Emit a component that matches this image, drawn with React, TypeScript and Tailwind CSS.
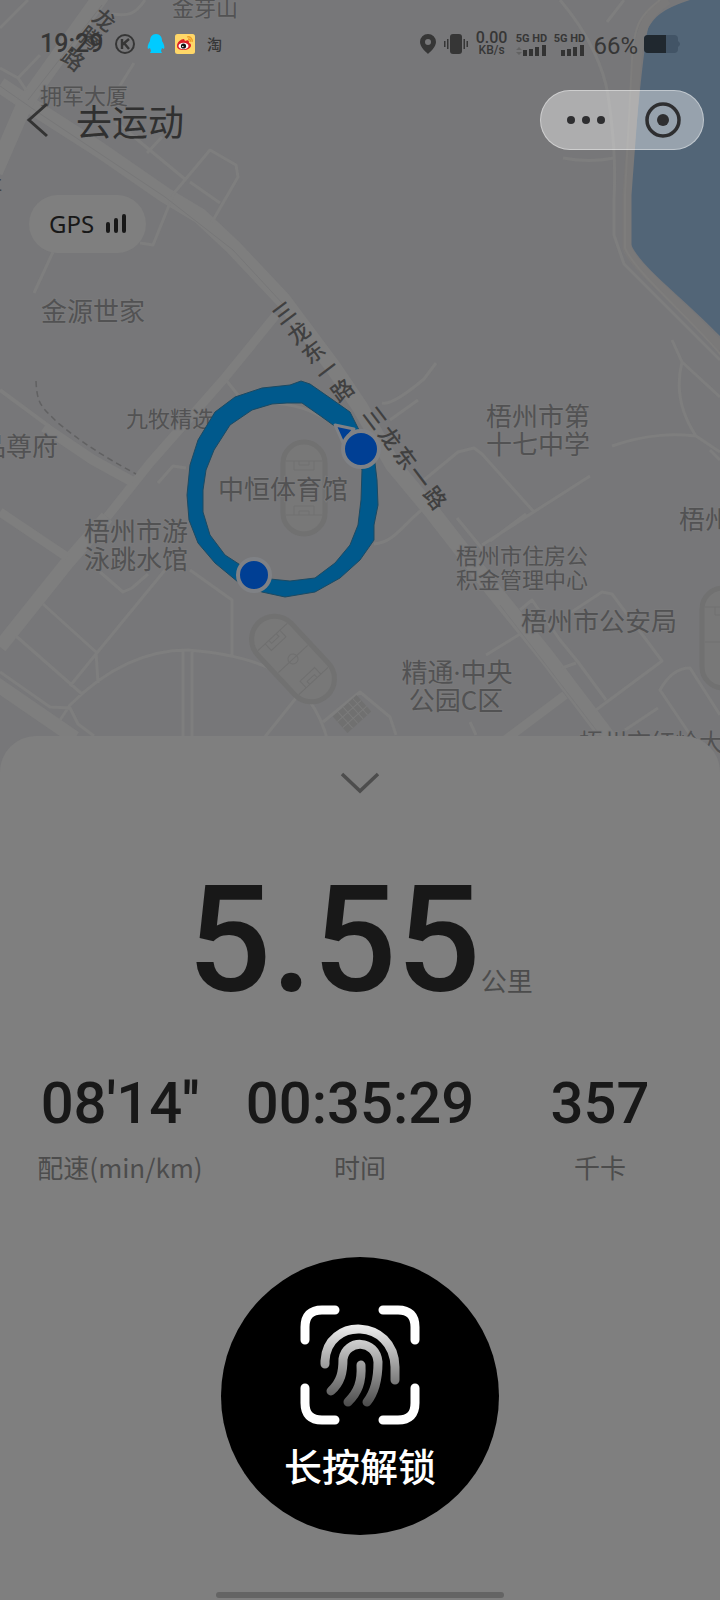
import React from "react";

const CJK = "font-['Noto_Sans_CJK_SC',sans-serif]";

type Label = { x: number; y: number; size: number; text: string; anchor?: "start" | "middle" };

const labels: Label[] = [
  { x: 172, y: 16, size: 22, text: "金芽山" },
  { x: 40, y: 104, size: 22, text: "拥军大厦" },
  { x: 41, y: 321, size: 26, text: "金源世家" },
  { x: 126, y: 427, size: 22, text: "九牧精选" },
  { x: -20, y: 456, size: 26, text: "品尊府" },
  { x: 218, y: 499, size: 26, text: "中恒体育馆" },
  { x: 84, y: 541, size: 26, text: "梧州市游" },
  { x: 84, y: 569, size: 26, text: "泳跳水馆" },
  { x: 486, y: 426, size: 26, text: "梧州市第" },
  { x: 486, y: 454, size: 26, text: "十七中学" },
  { x: 456, y: 564, size: 22, text: "梧州市住房公" },
  { x: 456, y: 588, size: 22, text: "积金管理中心" },
  { x: 521, y: 631, size: 26, text: "梧州市公安局" },
  { x: 679, y: 529, size: 26, text: "梧州市" },
  { x: 456, y: 710, size: 26, text: "公园C区", anchor: "middle" },
  { x: 579, y: 751, size: 24, text: "梧州市红岭大厦" },
];

const thinRoads = [
  "M0 68 18 78 26 90M18 78 40 55M145 0C135 15 128 16 112 14M28 0 0 28M134 63 116 92M116 122 186 180",
  "M162 137 147 153M174 193 210 150 236 165 238 177 212 222M174 193 153 245 140 243M53 252 34 293",
  "M190 182 220 203M226 380 238 395M236 404Q290 398 322 417",
  "M560 0C590 35 604 70 608 95 613 130 616 160 614 200L614 235 624 264 720 360",
  "M607 22 624 0M563 158Q590 163 614 158",
  "M436 363 424 379C405 395 390 405 382 403M418 400 390 420M374 544C395 542 402 525 424 508",
  "M424 480 458 452 474 448 482 454 534 512M482 545 590 476M490 541 526 514M457 518 484 551",
  "M612 446C650 433 675 434 696 436L720 452M672 340 682 362C675 390 682 415 696 436M682 362 720 397M710 450 720 460",
  "M570 613 602 592 612 594 662 661 596 710M520 610 532 600 560 640 578 662 606 700M486 655 520 634M562 668 576 663",
  "M695 742 660 690Q672 668 690 668L720 715M625 730 658 708M470 722 476 735",
  "M158 483 173 466 186 468M100 572 123 592 132 588 148 574M165 570 96 654 70 686M43 604 96 652 98 683M16 636 82 694",
  "M190 570 232 600 232 655M60 720 70 705C110 665 150 650 188 650 250 655 310 670 328 742M183 651V745M192 651V745M296 698 264 738M323 722 345 704 360 692 390 717 396 735M0 672 50 707 70 708 78 724 94 736",
];

function Pitch() {
  return (
    <g fill="none" stroke="#717171" strokeWidth="1">
      <rect x="-21" y="-46" width="42" height="92" rx="21" fill="#787878" strokeWidth="5" />
      <path d="M-18-27H18M-18 27H18M-10-27v9H10v-9M-5-27v4H5v-4M-10 27v-9H10v9M-5 27v-4H5v4" />
    </g>
  );
}

function MapCanvas() {
  return (
    <svg
      className={`absolute inset-0 h-full w-full ${CJK}`}
      viewBox="0 0 720 776"
      preserveAspectRatio="xMidYMin slice"
      role="img"
      aria-label="运动轨迹地图"
    >
      <rect width="720" height="776" fill="#777779" />
      <path d="M690 0C665 8 656 15 648 28 642 60 635 140 630 200V242C638 265 680 295 720 336V0Z" fill="#526577" />
      <path d="M668 0C645 15 640 30 637 60L627 195V248C635 270 690 310 722 348" fill="none" stroke="#7a7979" strokeWidth="9" />
      <path d="M660 0C640 15 634 25 632 60L625 195V248C635 272 690 318 722 356" fill="none" stroke="#7e7d7c" strokeWidth="2" />
      <g fill="none" stroke="#7e7e7e" strokeLinejoin="round">
        <path d="M0 85 33 107 100 150 165 195 200 216 233 247 283 300 333 367 360 407 393 465 433 513 493 590 547 657 600 727 620 755" strokeWidth="16" />
        <path d="M102-5 25 103-5 172" strokeWidth="16" />
        <path d="M276 315 223 380 150 463 107 517" strokeWidth="9" />
        <path d="M107 517 67 563 0 647" strokeWidth="14" />
        <path d="M0 390 50 427" strokeWidth="4" />
        <path d="M44 427 93 460 133 482" strokeWidth="10" />
        <path d="M0 512 67 557" strokeWidth="9" />
        <path d="M-5 683 75 738" strokeWidth="14" />
        <path d="M565 695 505 740" strokeWidth="9" />
        <path d={thinRoads.join("")} strokeWidth="3" />
      </g>
      <path d="M0 86 33 109 165 197 233 250 283 304M102 5 28 100" fill="none" stroke="#777778" />
      <path d="M500 605 600 735" fill="none" stroke="#79797a" />
      <path d="M36 381C37 405 42 407 58 423 85 445 105 457 136 474" fill="none" stroke="#616162" strokeWidth="1.5" strokeDasharray="6 4" />

      <g transform="translate(304 488)"><Pitch /></g>
      <g transform="translate(293 659) rotate(-43)">
        <rect x="-23" y="-50" width="46" height="100" rx="23" fill="#787878" stroke="#717171" strokeWidth="5" />
        <path d="M-20-30H20M-20 30H20M-10-30v9H10v-9M-5-30v4H5v-4M-10 30v-9H10v9M-5 30v-4H5v4M-20 0H20" fill="none" stroke="#6f6f6f" />
        <circle r="5" fill="none" stroke="#6f6f6f" />
      </g>
      <g transform="translate(723 638)">
        <rect x="-21" y="-50" width="60" height="100" rx="21" fill="#787878" stroke="#717171" strokeWidth="5" />
        <path d="M-18-31H20M-18 4H20M-8-31v8h20" fill="none" stroke="#717171" />
      </g>
      <g transform="translate(352 714) rotate(-42)" stroke="#7b7b7b">
        <rect x="-16" y="-11" width="32" height="22" fill="#707070" stroke="none" />
        <path d="M-16-4H16M-16 4H16M-9-11V11M-2-11V11M5-11V11M11-11V11" />
      </g>

      <g fill="#525253" stroke="#7a7a7b" strokeWidth="2" paintOrder="stroke">
        {labels.map((l) => (
          <text key={l.text} x={l.x} y={l.y} fontSize={l.size} textAnchor={l.anchor ?? "start"}>
            {l.text}
          </text>
        ))}
        <text x="457" y="682" fontSize="26" textAnchor="middle">
          精通<tspan fontFamily="Noto Sans, sans-serif">·</tspan>中央
        </text>
      </g>
      <text x="-18" y="190" fontSize="20" fill="#444">社</text>

      <g fontSize="22" fontWeight="500" fill="#404040" textAnchor="middle">
        <g transform="translate(104 20) rotate(38)">
          <text x="0 0 0" y="8 31 58">龙腾路</text>
        </g>
        <g transform="translate(284 313) rotate(-37)">
          <text x="0 0 0 0 0" y="8 33 57 80 105">三龙东一路</text>
        </g>
        <g transform="translate(405 458) rotate(53)">
          <text x="-50 -25 0 24 50" y="8 8 8 8 8">三龙东一路</text>
        </g>
      </g>

      <path
        fillRule="evenodd"
        fill="#00598c"
        stroke="#1c4a63"
        strokeWidth="1"
        strokeLinejoin="round"
        d="M301 381 310 384 333 400 350 412 358 428 374 455 377 480 378 505 374 525 374 540 360 560 340 578 315 592 285 597 262 592 238 582 215 563 198 543 189 520 187 495 190 465 198 440 215 412 235 397 262 388 290 385ZM287 403 302 403 322 417 340 430 358 455 362 470 361 500 358 525 350 545 335 563 315 578 290 581 270 579 245 568 225 555 210 535 203 512 203 490 206 470 214 450 230 425 252 410 272 404Z"
      />
      <g fill="#003f94" stroke="#7f8185" strokeWidth="4">
        <path d="M335 425 354 429 343 443Z" strokeWidth="3" strokeLinejoin="round" />
        <circle cx="361" cy="449" r="18" />
        <circle cx="254" cy="575" r="16" />
      </g>
    </svg>
  );
}

function Bars({ arrows = false }: { arrows?: boolean }) {
  return (
    <svg className="h-[11px] w-8" viewBox="0 0 32 11" aria-hidden="true">
      {arrows && <path d="M1 5 4 2 7 5ZM1 7 4 10 7 7Z" fill="#636363" />}
      <path d="M8 5h4v6H8ZM14 4h4v7h-4ZM20 2h4v9h-4ZM27 0h4v11h-4Z" fill="#333" />
    </svg>
  );
}

function StatusBar() {
  return (
    <div className="flex h-7 items-center justify-between pr-10 pl-10 font-[Roboto,sans-serif] text-[#363636]">
      <div className="flex items-center">
        <span className="w-[75px] text-[25px] leading-7 font-medium">19:29</span>
        <svg className="mr-3 h-5 w-5" viewBox="0 0 20 20" fill="none" stroke="currentColor" strokeWidth="2" aria-hidden="true">
          <circle cx="10" cy="10" r="9" />
          <path d="M7 5v10M14 5 7 11M9 9l5 6" strokeWidth="2.4" />
        </svg>
        <svg className="mr-2 h-5 w-5" viewBox="0 0 20 20" aria-hidden="true">
          <path d="M9 0C13 0 15 3 15 7 17 10 18 13 17 15L15 14 14 17 15 19H3L4 17 3 14 1 15C0 13 1 10 3 7 3 3 5 0 9 0Z" fill="#00cbff" />
        </svg>
        <svg className="mr-3 h-5 w-5" viewBox="0 0 20 20" aria-hidden="true">
          <rect width="20" height="20" rx="2.5" fill="#ffd768" />
          <path d="M2 12C2 8 6 5 9 5L10 7C14 5 14 7 14 9 18 10 16 16 9 16 5 16 2 15 2 12Z" fill="#dc1f28" />
          <ellipse cx="8.500" cy="12" rx="5" ry="3.200" fill="#fff" />
          <circle cx="8.500" cy="12" r="2.600" fill="#111" />
          <circle cx="7.800" cy="12.500" r=".8" fill="#fff" />
          <path d="M12 3C15 2 18 5 17 8M13 5C15 5 16 6 15 8" fill="none" stroke="#ee9b23" strokeWidth="1.300" />
        </svg>
        <span className={`text-[15px] leading-5 font-medium ${CJK}`}>淘</span>
      </div>
      <div className="flex items-center">
        <svg className="mr-2 h-5 w-4" viewBox="0 0 16 20" fill="currentColor" aria-hidden="true">
          <path fillRule="evenodd" d="M8 0a8 8 0 0 1 8 8c0 5-6 10-8 12C6 18 0 13 0 8a8 8 0 0 1 8-8Zm0 5a3 3 0 1 0 0 6 3 3 0 0 0 0-6Z" />
        </svg>
        <svg className="mr-2 h-5 w-6" viewBox="0 0 24 20" fill="currentColor" aria-hidden="true">
          <rect x="6" width="12" height="20" rx="3" />
          <path d="M3 5h1.500v10H3ZM0 7h1.500v6H0ZM19.500 5H21v10h-1.500ZM22.500 7H24v6h-1.500Z" />
        </svg>
        <span className="mr-2 flex flex-col items-center">
          <span className="text-base leading-3 font-medium">0.00</span>
          <span className="text-xs leading-3 font-medium">KB/s</span>
        </span>
        <span className="mr-1.5 flex flex-col items-center gap-px text-[11px] leading-[11px] font-bold">
          5G HD
          <Bars arrows />
        </span>
        <span className="mr-2 flex flex-col items-center gap-px text-[11px] leading-[11px] font-bold">
          5G HD
          <Bars />
        </span>
        <span className="mr-1.5 pt-1 text-2xl leading-6">66%</span>
        <svg className="h-[18px] w-9" viewBox="0 0 36 18" aria-label="电量66%">
          <rect width="34" height="18" rx="4" fill="#425466" />
          <path d="M34 6q4 3 0 6Z" fill="#425466" />
          <path d="M4 0H22V18H4Q0 18 0 14V4Q0 0 4 0Z" fill="#20282f" />
        </svg>
      </div>
    </div>
  );
}

function Metric({ value, label }: { value: string; label: string }) {
  return (
    <div className="flex flex-col items-center gap-3 whitespace-nowrap">
      <dd className="font-[Roboto,sans-serif] text-[58px] leading-[60px] font-medium text-[#181818]">{value}</dd>
      <dt className="order-last text-[26px] leading-[44px] text-[#4c4c4c]">{label}</dt>
    </div>
  );
}

export default function App() {
  return (
    <main className={`flex min-h-screen flex-col overflow-hidden bg-[#7f7f7f] ${CJK}`}>
      <section className="relative h-[776px] overflow-hidden">
        <MapCanvas />
        <div className="relative pt-[30px]">
          <StatusBar />
          <header className="mt-8 flex items-center justify-between pr-4 pl-6">
            <div className="flex items-center gap-7">
              <button aria-label="返回" className="text-[#333]">
                <svg className="h-9 w-6" viewBox="0 0 24 36" fill="none" stroke="currentColor" strokeWidth="3" aria-hidden="true">
                  <path d="M23 2 5 18 23 34" />
                </svg>
              </button>
              <h1 className="text-4xl leading-[56px] text-[#303030]">去运动</h1>
            </div>
            <div className="flex h-[60px] w-[164px] items-center justify-between rounded-full border border-white/40 bg-white/40 pr-[22px] pl-[26px] text-[#2e2e30]">
              <button aria-label="更多">
                <svg className="h-2 w-[38px]" viewBox="0 0 38 8" fill="currentColor" aria-hidden="true">
                  <circle cx="4" cy="4" r="4" />
                  <circle cx="19" cy="4" r="4" />
                  <circle cx="34" cy="4" r="4" />
                </svg>
              </button>
              <button aria-label="关闭">
                <svg className="h-9 w-9" viewBox="0 0 36 36" aria-hidden="true">
                  <circle cx="18" cy="18" r="16" fill="none" stroke="currentColor" strokeWidth="3.500" />
                  <circle cx="18" cy="18" r="6" fill="currentColor" />
                </svg>
              </button>
            </div>
          </header>
          <div className="mt-[45px] ml-[29px] inline-flex h-[58px] items-center gap-3 rounded-full bg-[#7f7f7f] px-5 text-[#181818]">
            <span className="font-['Noto_Sans',sans-serif] text-2xl">GPS</span>
            <svg className="h-5 w-5" viewBox="0 0 20 20" fill="none" stroke="currentColor" strokeWidth="4" strokeLinecap="round" aria-hidden="true">
              <path d="M2 10v7M10 6v11M18 2v15" />
            </svg>
          </div>
        </div>
      </section>

      <section className="relative -mt-10 flex flex-1 flex-col items-center rounded-t-[36px] bg-[#7f7f7f]">
        <button aria-label="收起" className="mt-[34px] text-[#4d4d4d]">
          <svg className="h-6 w-10" viewBox="0 0 40 24" fill="none" stroke="currentColor" strokeWidth="3.500" aria-hidden="true">
            <path d="M2 4 20 21 38 4" />
          </svg>
        </button>
        <p className="mt-[71px] flex items-baseline">
          <span className="font-[Roboto,sans-serif] text-[148px] leading-[152px] font-medium text-[#181818]">5.55</span>
          <span className="text-[26px] leading-8 text-[#4c4c4c]">公里</span>
        </p>
        <dl className="mt-14 grid w-full grid-cols-3">
          <Metric value="08'14''" label="配速(min/km)" />
          <Metric value="00:35:29" label="时间" />
          <Metric value="357" label="千卡" />
        </dl>
        <button className="mt-[68px] flex h-[278px] w-[278px] flex-col items-center rounded-full bg-black pt-12 text-white">
          <svg className="h-[120px] w-[120px]" viewBox="0 0 120 120" fill="none" strokeLinecap="round" aria-hidden="true">
            <defs>
              <linearGradient id="print" gradientUnits="userSpaceOnUse" x1="0" y1="18" x2="0" y2="102">
                <stop stopColor="#f2f2f2" />
                <stop offset="1" stopColor="#4a4a4a" />
              </linearGradient>
            </defs>
            <path
              d="M5 35V22Q5 5 22 5H35M83 5H98Q115 5 115 22V35M115 83V98Q115 115 98 115H83M35 115H22Q5 115 5 98V83"
              stroke="#fff"
              strokeWidth="9"
            />
            <path
              d="M25 59V56C27 12 94 13 95 62V75M31 86C41 77 43 67 43 54 46 34 76 34 78 57 78 75 75 87 67 97M61 60C62 77 58 87 48 97"
              stroke="url(#print)"
              strokeWidth="9"
            />
          </svg>
          <span className="mt-3.5 text-[38px] leading-[52px] font-medium">长按解锁</span>
        </button>
        <div className="mt-auto mb-[2px] h-1.5 w-[288px] rounded-full bg-[#646464]" />
      </section>
    </main>
  );
}
